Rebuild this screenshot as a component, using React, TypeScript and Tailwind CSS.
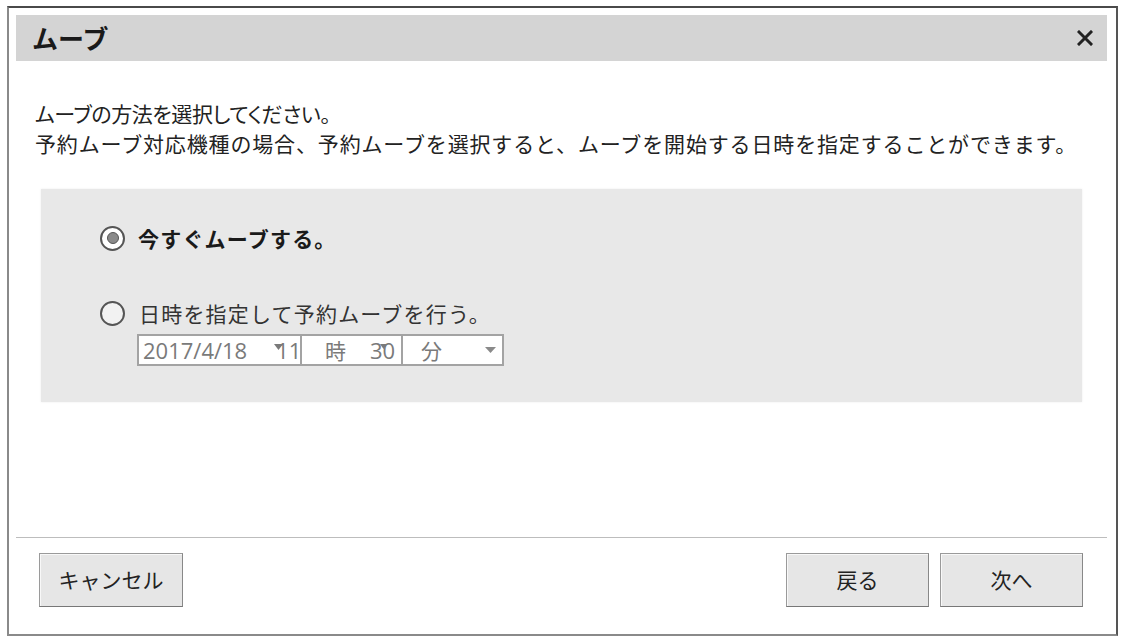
import React from "react";

const font = "font-['Noto_Sans_CJK_JP','Noto_Sans',sans-serif]";

export default function App() {
  return (
    <div className={`w-[1123px] h-[637px] bg-white pt-[6px] pl-[7px] ${font} text-[#222]`}>
      <div className="w-[1111px] h-[630px] border-2 border-[#8a8a8a] border-t-[#4a4a4a] border-r-[#555] flex flex-col pt-[7px] pl-[7px] pr-[9px]">
        {/* title bar */}
        <div className="h-[46px] bg-[#d4d4d4] flex items-center justify-between pl-[16px] pr-[14px]">
          <span className="text-[26px] font-bold leading-none text-[#1a1a1a]">ムーブ</span>
          <svg width="16" height="16" viewBox="0 0 16 16">
            <path d="M2 2 L14 14 M14 2 L2 14" stroke="#222" strokeWidth="3" strokeLinecap="square" />
          </svg>
        </div>

        {/* description */}
        <div className="mt-[37px] pl-[19px] text-[21px] leading-[30px] text-[#222]">
          <p className="[font-feature-settings:'palt'] tracking-[-0.4px]">ムーブの方法を選択してください。</p>
          <p className="tracking-[0.85px]">予約ムーブ対応機種の場合、予約ムーブを選択すると、ムーブを開始する日時を指定することができます。</p>
        </div>

        {/* options panel */}
        <div className="mt-[31px] ml-[25px] mr-[25px] h-[213px] bg-[#e8e8e8] pl-[59px] pt-[36px] shadow-[0_0_2px_rgba(0,0,0,0.08)]">
          <div className="flex items-center h-[26px]">
            <span className="w-[25px] h-[25px] rounded-full border-2 border-[#555] bg-white flex items-center justify-center">
              <span className="w-[12px] h-[12px] rounded-full bg-[#8a8a8a] border border-[#555]" />
            </span>
            <span className="ml-[13px] text-[21px] font-bold tracking-[1.2px] text-[#1a1a1a] leading-none">今すぐムーブする。</span>
          </div>

          <div className="flex items-center h-[26px] mt-[49px]">
            <span className="w-[25px] h-[25px] rounded-full border-2 border-[#555] bg-[#f2f2f2]" />
            <span className="ml-[14px] text-[21px] tracking-[1.2px] text-[#333] leading-none">日時を指定して予約ムーブを行う。</span>
          </div>

          <div className="ml-[37px] mt-[8px] w-[367px] h-[32px] border-2 border-[#a3a3a3] bg-white flex text-[21px] text-[#7a7a7a] leading-none">
            <div className="w-[163px] h-full border-r-2 border-[#a3a3a3] flex items-center pl-[4px]">
              <span className="font-['Open_Sans',sans-serif] text-[22px]">2017/4/18</span>
              <span className="ml-[29px] font-['Open_Sans',sans-serif] text-[22px] relative">
                11
                <svg className="absolute left-[-2px] top-[5px]" width="9" height="6" viewBox="0 0 9 6">
                  <path d="M0 0 H9 L4.5 6 Z" fill="#7a7a7a" />
                </svg>
              </span>
            </div>
            <div className="w-[101px] h-full border-r-2 border-[#a3a3a3] flex items-center pl-[23px]">
              <span>時</span>
              <span className="ml-[24px] font-['Open_Sans',sans-serif] text-[22px] relative">
                30
                <svg className="absolute left-[10px] top-[5px]" width="7" height="5" viewBox="0 0 7 5">
                  <path d="M0 0 H7 L3.5 5 Z" fill="#7a7a7a" />
                </svg>
              </span>
            </div>
            <div className="flex-1 h-full flex items-center pl-[18px] pr-[6px] justify-between">
              <span>分</span>
              <svg width="11" height="6" viewBox="0 0 11 6">
                <path d="M0 0 H11 L5.5 6 Z" fill="#8a8a8a" />
              </svg>
            </div>
          </div>
        </div>

        {/* separator */}
        <div className="mt-[135px] h-px bg-[#bdbdbd]" />

        {/* buttons */}
        <div className="mt-[15px] flex items-center justify-between pl-[23px] pr-[24px]">
          <button className="w-[144px] h-[54px] bg-[#e6e6e6] border border-[#9a9a9a] border-b-[#777] border-r-[#888] text-[21px] text-[#222] shadow-[inset_1px_1px_0_#f8f8f8]">
            キャンセル
          </button>
          <div className="flex gap-[11px]">
            <button className="w-[143px] h-[54px] bg-[#e6e6e6] border border-[#9a9a9a] border-b-[#777] border-r-[#888] text-[21px] text-[#222] shadow-[inset_1px_1px_0_#f8f8f8]">
              戻る
            </button>
            <button className="w-[143px] h-[54px] bg-[#e6e6e6] border border-[#9a9a9a] border-b-[#777] border-r-[#888] text-[21px] text-[#222] shadow-[inset_1px_1px_0_#f8f8f8]">
              次へ
            </button>
          </div>
        </div>
      </div>
    </div>
  );
}
